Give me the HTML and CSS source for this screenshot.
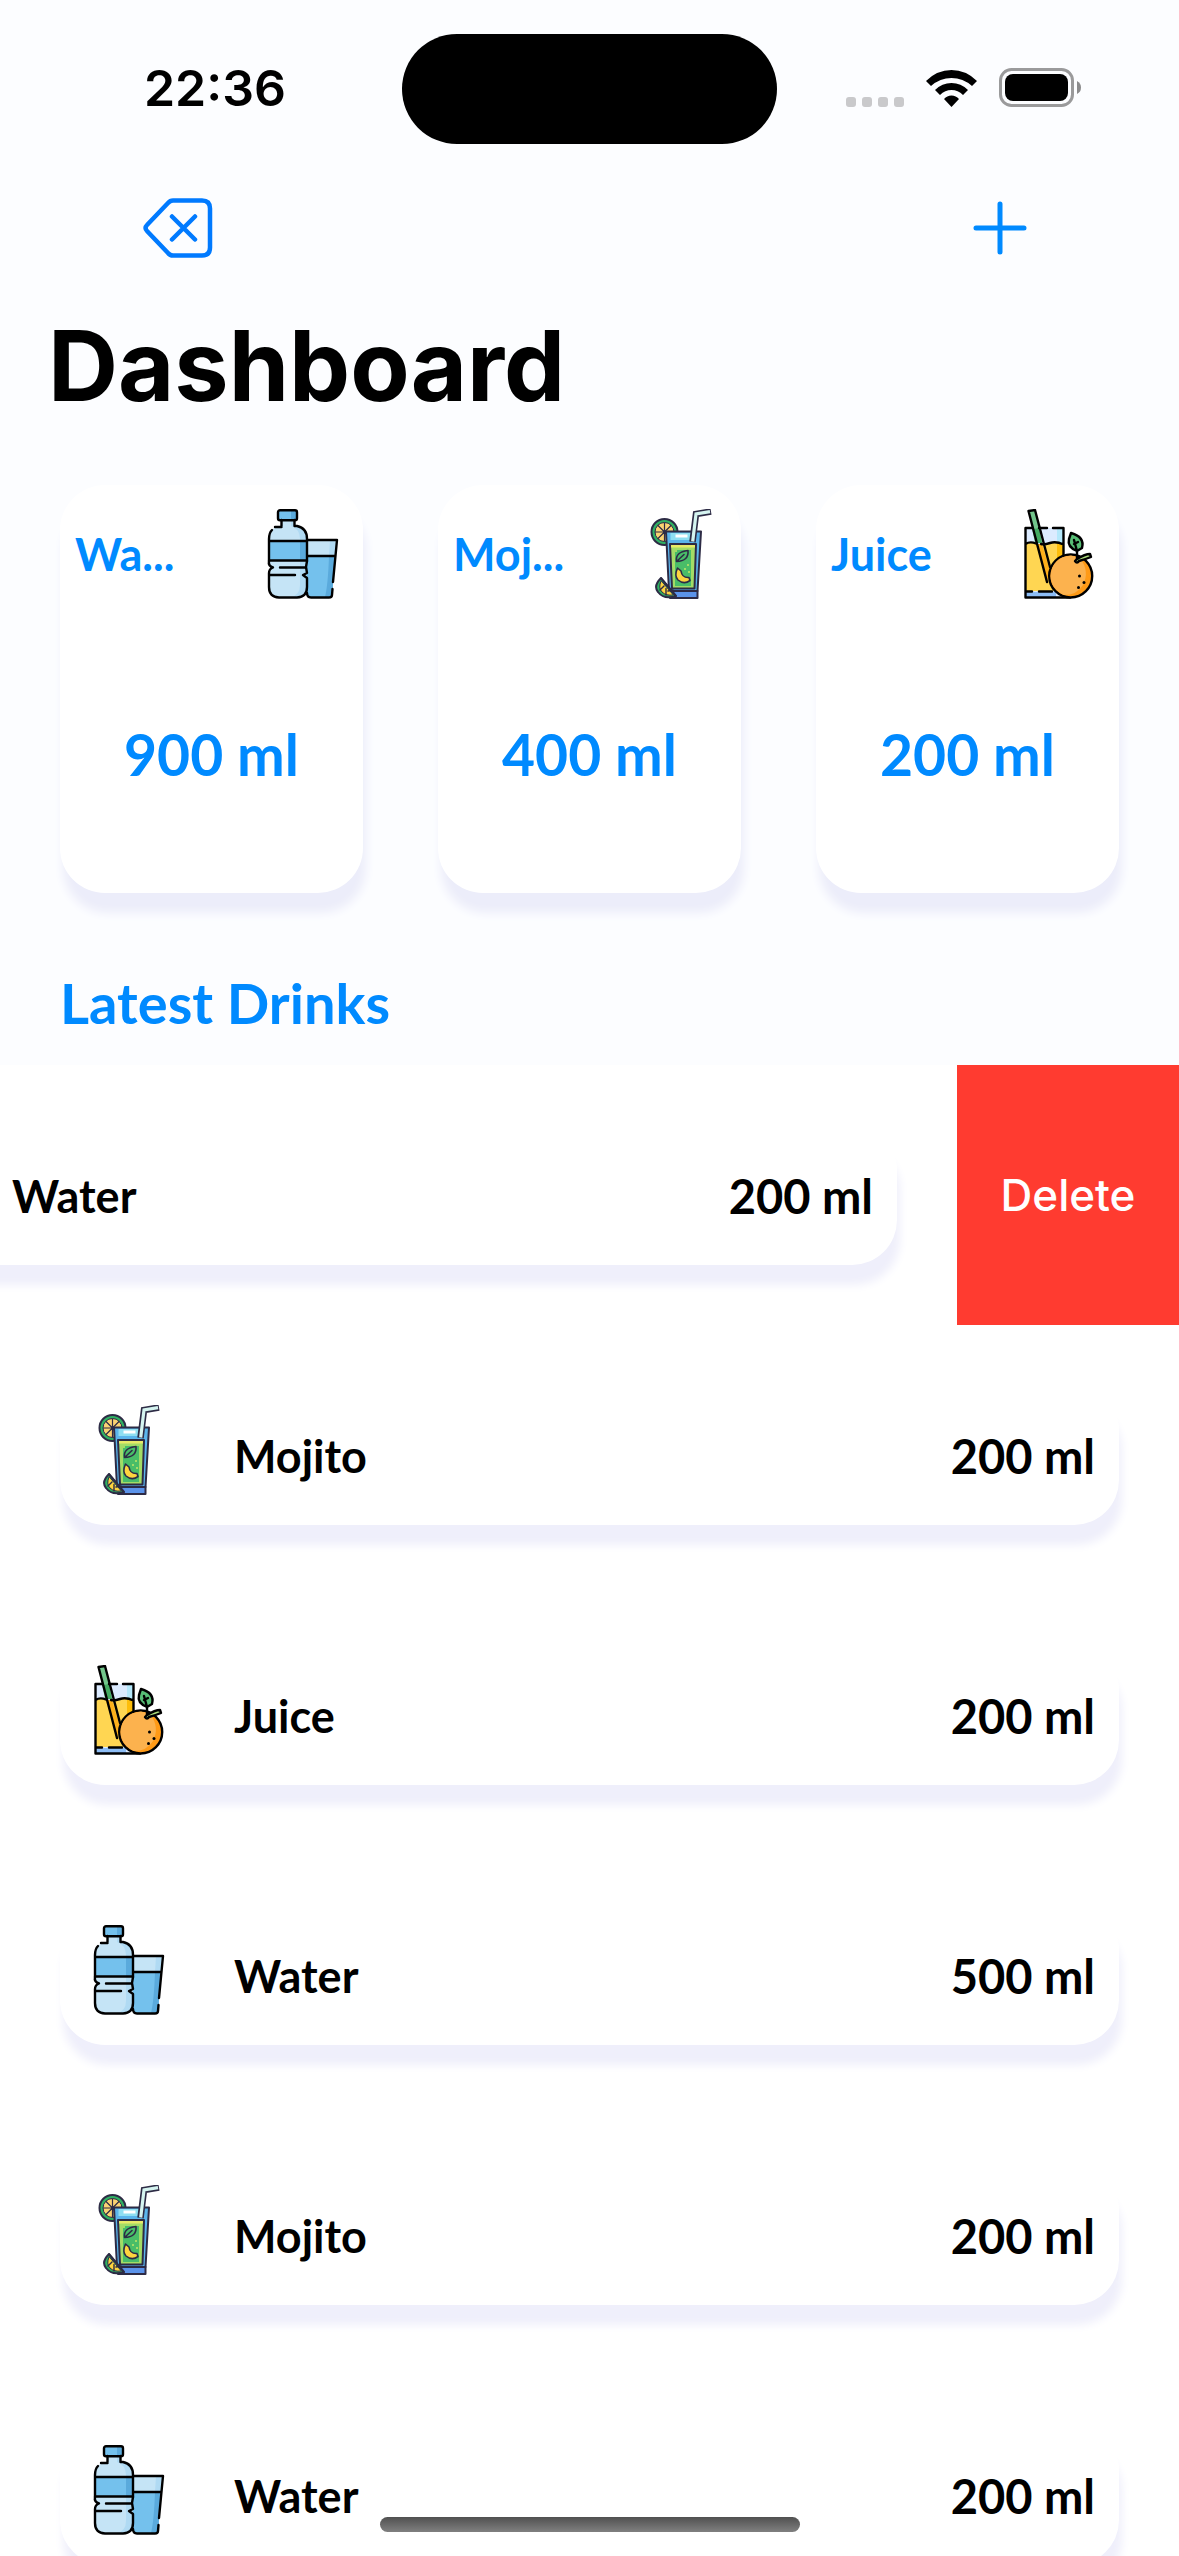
FILE: index.html
```html
<!DOCTYPE html>
<html lang="en">
<head>
<meta charset="utf-8">
<meta name="viewport" content="width=device-width, initial-scale=1">
<title>Dashboard</title>
<link rel="stylesheet" href="styles.css">
</head>
<body>
<svg class="sprite" aria-hidden="true">
  <symbol id="water" viewBox="0 0 90 90">
    <path d="M49 31H79L74 86Q74 88 72 88H51Q49 88 49 86Z" fill="#c5e4f6"/>
    <path d="M72 31H79L78 47H71Z" fill="#b0daf3"/>
    <path d="M49 47H77L74 86Q74 88 72 88H51L49 86Z" fill="#74c1ed"/>
    <path d="M71 47H77L74 88H67Q70 76 71 47Z" fill="#5aaadc"/>
    <path d="M24 10H36V17Q49 18 49 30V52L48 58L49 66V78Q49 88 39 88H20Q11 87 11 78V66L13 59L11 52V30Q11 18 24 17Z" fill="#c5e4f6"/>
    <path d="M33 10H36V17Q49 18 49 30V52L48 58L49 66V78Q49 88 39 88H33Q42 86 42 76V30Q42 20 33 17Z" fill="#b0daf3"/>
    <path d="M11 32H49V52H11Z" fill="#74c1ed"/>
    <path d="M42 32H49V52H42Z" fill="#5aaadc"/>
    <rect x="20" y="1" width="19" height="10" rx="2" fill="#74c1ed"/>
    <path d="M33 1H37Q39 1 39 3V11H33Z" fill="#5aaadc"/>
    <g fill="none" stroke="#000" stroke-width="2.4" stroke-linecap="round" stroke-linejoin="round">
      <rect x="20" y="1.200" width="19" height="10" rx="2"/>
      <path d="M23.500 11V17M36.500 11V17H39Q49 19 49 30V52M17 18H23.500M14 21Q11 24 11 30V52M11 32H49M11 51.500H49"/>
      <path d="M11 52Q10 57 15 58.500Q11 60 11 64V78Q11 88 21 88.500H39Q49 88 49 78V69L45 66L49 64L48 58L49 52M22 58.500H48M12 66H37"/>
      <path d="M50 31H79L75 73M50 47H77M74.500 80L74 86Q74 88.500 71 88.500H53Q49 88.500 49 84"/>
    </g>
  </symbol>
  <symbol id="mojito" viewBox="0 0 90 90">
    <g stroke="#2d2b45" stroke-width="2" stroke-linejoin="round" stroke-linecap="round">
      <circle cx="28.500" cy="23" r="13" fill="#2fb163"/>
      <circle cx="28.500" cy="23" r="9.500" fill="#fbd372" stroke-width="1"/>
      <path d="M28.500 14V32M19.500 23H37.500M22 16.500L35 29.500M35 16.500L22 29.500" stroke-width="1.200"/>
      <path d="M30 22.500H65L61.500 82H33Z" fill="#5bb5ec"/>
      <path d="M34 82H61.500V89H34Z" fill="#5b93ea"/>
      <path d="M34.500 24H58L57 31H34.500Z" fill="#8edff2" stroke="none"/>
      <path d="M39.500 25.500H51.500V28.500H39.500Z" fill="#fff" stroke="none"/>
      <path d="M34 35H60L58.500 79.500H36Z" fill="#a3dc66"/>
      <path d="M35 36H59V38.500H35Z" fill="#e8ea68" stroke="none"/>
      <path d="M39 41H55V77H39Z" fill="#49bd68" stroke="none"/>
      <path d="M39 41H41V43H39ZM51 55H53V57H51ZM48 59H50V61H48ZM52 62H54V64H52Z" fill="#a3dc66" stroke="none"/>
      <path d="M40.500 52.500Q39 43 52 41.500Q53 52 40.500 52.500L48 45.500" fill="#49bd68" stroke-width="1.600"/>
      <path d="M41.500 59Q38 67 42 71Q48 76 54 71.500L53 68.500Q46 69 45 62Z" fill="#fed43f" stroke-width="1.600"/>
      <path d="M25 69Q17 77 22 83Q28 91 40 87Z" fill="#2fb163"/>
      <path d="M25 72Q22 79 26 83Q30 87 37 86Z" fill="#fed43f" stroke-width="1"/>
      <path d="M28 77L24 81M30 79.500V86M32 82L37 81M25 69L40 87" stroke-width="1.400"/>
      <path d="M56.500 33L60 5L75 2.500" fill="none" stroke-width="6.500" stroke-linecap="butt" stroke-linejoin="miter"/>
      <path d="M56.700 32.500L60 5L74 2.700" fill="none" stroke="#d5f4f0" stroke-width="3.200" stroke-linecap="butt" stroke-linejoin="miter"/>
    </g>
  </symbol>
  <symbol id="juice" viewBox="0 0 90 90">
    <path d="M11.500 19H49.500V88H11.500Z" fill="#dcebff"/>
    <path d="M43 19H49.500V36H43Z" fill="#b5e8fb"/>
    <path d="M11.500 35Q17 32 23 35T36 34T49.500 36V82H11.500Z" fill="#ffd652"/>
    <path d="M43 34L49.500 36V60H43Z" fill="#fdbd0b"/>
    <path d="M12 83H42V88H12Z" fill="#8dbdf5"/>
    <path d="M14.500 2L21 .800L28 34H21Z" fill="#72c58b"/>
    <path d="M20 20L25 19L28 34H22Z" fill="#43ab62"/>
    <path d="M21.500 35H28L36 62L33.500 72Z" fill="#fdb01b"/>
    <g fill="none" stroke="#000" stroke-width="2.400" stroke-linejoin="round" stroke-linecap="round">
      <path d="M18 19H11.500V88.500H56M25 19H33M39 19H49.500V46M11.500 35Q16 32 22 34.500M27 35Q30 36 36 34T49.500 35.500M11.500 82.500H18M25 82.500H38"/>
      <path d="M33 73L14.500 2L21 1L36 58"/>
      <circle cx="56.700" cy="67" r="21.500" fill="#ff9a16"/>
    </g>
    <path d="M66 49Q76 62 69 76Q63 86 50 86Q37 80 36.500 67Q38 48 57 46.500Z" fill="#fcb24e"/>
    <g fill="none" stroke="#000" stroke-width="2.400" stroke-linejoin="round" stroke-linecap="round">
      <path d="M57 24Q71 28 68 39L63 42Q53 38 55 30ZM60 31L63 42L63 50M60 35L64 33" fill="#57bd75"/>
      <path d="M63 50Q71 45 76 45L77 48Q72 50 65 52Q63 55 61 52Z" fill="#abdc7b"/>
    </g>
    <circle cx="65.500" cy="67" r="1.500"/><circle cx="70" cy="73.500" r="1.500"/><circle cx="64.500" cy="78.500" r="1.500"/>
  </symbol>
</svg>

<div class="app">
  <header class="status">
    <time class="clock">22:36</time>
    <div class="island"></div>
    <div class="indicators">
      <svg class="dots" viewBox="0 0 58 10" fill="#c9c9cb"><rect width="10" height="10" rx="3"/><rect x="16" width="10" height="10" rx="3"/><rect x="32" width="10" height="10" rx="3"/><rect x="48" width="10" height="10" rx="3"/></svg>
      <svg class="wifi" viewBox="0 0 51 38"><path d="M0 12Q11 1 25.500 1T51 12L46 17Q37 9 25.500 9T5 17ZM9 21Q16 14 25.500 14T42 21L37 26Q32 21 25.500 21T14 26ZM18 30Q21 26.500 25.500 26.500T33 30L25.500 38Z"/></svg>
      <svg class="battery" viewBox="0 0 82 39"><rect x="1.500" y="1.500" width="72" height="36" rx="11" fill="none" stroke="#9a9a9b" stroke-width="3"/><rect x="6" y="6" width="63" height="27" rx="8"/><path d="M78 13Q82 15 82 19.500T78 26Z" fill="#8b8b8c"/></svg>
    </div>
  </header>

  <nav class="toolbar">
    <button class="tool" type="button" aria-label="Remove last drink">
      <svg class="backspace" viewBox="0 0 70 60" fill="none" stroke="#007aff" stroke-width="4.500" stroke-linecap="round" stroke-linejoin="round"><path d="M30 2.500H59Q67 2.500 67 10.500V49.500Q67 57.500 59 57.500H30Q27 57.500 25 55L4 33Q1 30 4 27L25 5Q27 2.500 30 2.500ZM29 18.500L52 41.500M52 18.500L29 41.500"/></svg>
    </button>
    <button class="tool" type="button" aria-label="Add drink">
      <svg class="plus" viewBox="0 0 54 54" fill="none" stroke="#008aff" stroke-width="5" stroke-linecap="round"><path d="M27 3V51M3 27H51"/></svg>
    </button>
  </nav>

  <h1 class="title">Dashboard</h1>

  <section class="cards">
    <article class="card"><div class="card-head"><h3 class="name">Wa...</h3><svg class="icon"><use href="#water"/></svg></div><p class="total">900 ml</p></article>
    <article class="card"><div class="card-head"><h3 class="name">Moj...</h3><svg class="icon"><use href="#mojito"/></svg></div><p class="total">400 ml</p></article>
    <article class="card"><div class="card-head"><h3 class="name">Juice</h3><svg class="icon"><use href="#juice"/></svg></div><p class="total">200 ml</p></article>
  </section>

  <h2 class="subtitle">Latest Drinks</h2>

  <ul class="list">
    <li class="row swiped"><div class="cell"><div class="drink"><svg class="icon"><use href="#water"/></svg><span>Water</span><span class="amount">200 ml</span></div></div><button class="delete" type="button">Delete</button></li>
    <li class="row"><div class="cell"><div class="drink"><svg class="icon"><use href="#mojito"/></svg><span>Mojito</span><span class="amount">200 ml</span></div></div></li>
    <li class="row"><div class="cell"><div class="drink"><svg class="icon"><use href="#juice"/></svg><span>Juice</span><span class="amount">200 ml</span></div></div></li>
    <li class="row"><div class="cell"><div class="drink"><svg class="icon"><use href="#water"/></svg><span>Water</span><span class="amount">500 ml</span></div></div></li>
    <li class="row"><div class="cell"><div class="drink"><svg class="icon"><use href="#mojito"/></svg><span>Mojito</span><span class="amount">200 ml</span></div></div></li>
    <li class="row"><div class="cell"><div class="drink"><svg class="icon"><use href="#water"/></svg><span>Water</span><span class="amount">200 ml</span></div></div></li>
  </ul>
  <div class="home"></div>
</div>
</body>
</html>
```
FILE: styles.css
```css
* {
  box-sizing: border-box;
  margin: 0;
  padding: 0;
}

body {
  background: #fcfdff;
  color: #000;
  font-family: Lato, "Liberation Sans", sans-serif;
}

button {
  border: 0;
  background: none;
  font: inherit;
}

svg {
  display: block;
  flex: none;
}

.sprite {
  position: absolute;
  width: 0;
  height: 0;
}

.app {
  position: relative;
  display: flex;
  flex-direction: column;
  height: 100vh;
  overflow: hidden;
}

/* Status bar */
.status {
  display: grid;
  grid-template-columns: 1fr 375px 1fr;
  align-items: start;
  height: 178px;
  padding-top: 34px;
  flex: none;
}

.clock {
  padding: 24px 0 0 28px;
  text-align: center;
  font: 600 50px/60px Inter, sans-serif;
}

.island {
  height: 110px;
  border-radius: 55px;
  background: #000;
}

.indicators {
  display: flex;
  justify-content: flex-end;
  align-items: flex-end;
  gap: 22px;
  padding: 34px 98px 0 0;
}

.dots { width: 58px; height: 10px; }
.wifi { width: 51px; height: 38px; }
.battery { width: 82px; height: 39px; }

/* Toolbar */
.toolbar {
  display: flex;
  justify-content: space-between;
  align-items: center;
  height: 100px;
  padding: 0 152px 0 143px;
  flex: none;
}

.backspace { width: 70px; height: 60px; }
.plus { width: 54px; height: 54px; }

.title {
  padding: 30px 48px 0;
  font: 700 97px/116px Inter, sans-serif;
}

/* Totals */
.cards {
  display: grid;
  grid-template-columns: repeat(3, 1fr);
  gap: 75px;
  padding: 61px 60px 0;
}

.card {
  min-width: 0;
  height: 408px;
  padding: 24px 15px;
  border-radius: 45px;
  background: #fff;
  box-shadow: 3px 20px 10px #ecedfa;
  color: #008aff;
}

.card-head {
  display: flex;
  justify-content: space-between;
  align-items: center;
}

.name {
  white-space: nowrap;
  font: 700 45px/60px Lato, sans-serif;
}

.icon {
  width: 90px;
  height: 90px;
}

.total {
  padding-top: 122px;
  text-align: center;
  font: 700 57px/66px Lato, sans-serif;
}

.subtitle {
  padding: 77px 60px 29px;
  color: #008aff;
  font: 700 56px/66px Lato, sans-serif;
}

/* Drink log */
.list {
  flex: 1;
  min-height: 0;
  overflow: hidden;
  list-style: none;
  background: #fff;
}

.row {
  display: flex;
  height: 260px;
  overflow: hidden;
}

.swiped {
  justify-content: flex-end;
}

.cell {
  flex: 0 0 100%;
  padding: 60px;
}

.drink {
  display: flex;
  align-items: center;
  gap: 60px;
  height: 140px;
  padding: 20px 24px 18px;
  border-radius: 45px;
  background: #fff;
  box-shadow: 3px 20px 10px #efeffb;
  font: 700 45px/60px Lato, sans-serif;
}

.drink .icon {
  align-self: flex-start;
}

.amount {
  margin-left: auto;
  font-size: 47px;
}

.delete {
  flex: 0 0 222px;
  background: #ff3b30;
  color: #fff;
  font: 500 44px/60px Inter, sans-serif;
}

.home {
  position: absolute;
  bottom: 24px;
  left: 50%;
  width: 420px;
  height: 15px;
  margin-left: -210px;
  border-radius: 8px;
  background: linear-gradient(#505050, #808080);
}
```
